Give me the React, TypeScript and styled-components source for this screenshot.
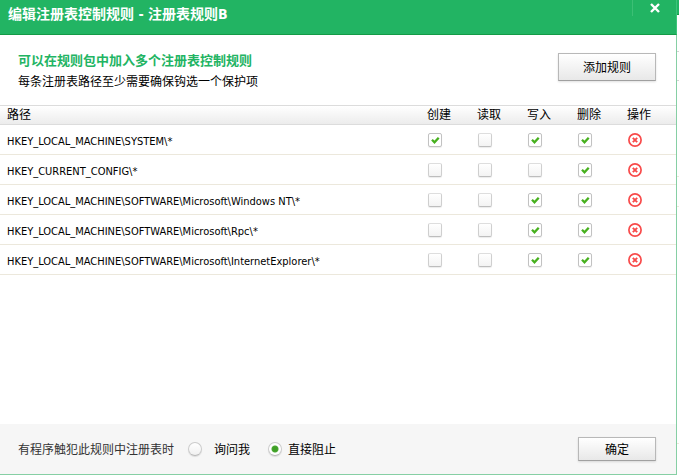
import React, { useState } from "react";
import styled, { createGlobalStyle } from "styled-components";

const GlobalStyle = createGlobalStyle`
  *, *::before, *::after { box-sizing: border-box; }
  html, body, #root { height: 100%; }
  body {
    margin: 0;
    background: #fff;
    color: #000;
    font: 12px/20px "Liberation Sans", "Noto Sans CJK SC", sans-serif;
  }
  button, input { font: inherit; color: inherit; }
`;

const Desktop = styled.div`
  display: grid;
  grid-template-columns: minmax(0, 1fr) 2px;
  min-height: 100%;
`;

const WindowBehind = styled.div`
  display: grid;
  grid-template-rows: 15px 37px 29px 96px 30px 237px 1fr;
  background: #fff;
`;

const BehindBand = styled.div<{ $tone?: "title" | "strong" }>`
  background: ${(p) => (p.$tone === "title" ? "#22b463" : "#fff")};
  border-bottom: 1px solid
    ${(p) => (p.$tone === "title" ? "#149a46" : p.$tone === "strong" ? "#d4d4d4" : "#ece8dc")};
`;

const Dialog = styled.section`
  display: flex;
  flex-direction: column;
  background: #fff;
  border: solid #86cfa4;
  border-width: 0 1px 1px 0;
`;

const TitleBar = styled.header`
  display: flex;
  justify-content: space-between;
  align-items: flex-start;
  height: 35px;
  margin-right: -1px;
  padding-left: 8px;
  background: #22b463;
  border: solid #149a46;
  border-width: 0 0 1px;
  border-right: 1px solid #3cc47a;
  color: #fff;
`;

const Title = styled.h1`
  margin: 0;
  padding-top: 4px;
  font-family: "DejaVu Sans Condensed", "Noto Sans CJK SC", sans-serif;
  font-size: 14px;
  line-height: 20px;
  font-weight: 700;
`;

const CloseButton = styled.button`
  display: flex;
  justify-content: center;
  width: 44px;
  height: 16px;
  padding: 3px 0 0;
  border: 0;
  border-left: 1px solid #3cbf75;
  background: none;
`;

const Intro = styled.div`
  display: flex;
  justify-content: space-between;
  align-items: flex-start;
  height: 70px;
  padding: 16px 20px 0 18px;
`;

const Lead = styled.h2`
  margin: 0;
  font-size: 13px;
  line-height: 20px;
  color: #22b463;
`;

const Hint = styled.p`
  margin: 0;
  line-height: 22px;
`;

const PushButton = styled.button<{ $size: "large" | "small" }>`
  width: ${(p) => (p.$size === "large" ? 98 : 78)}px;
  height: ${(p) => (p.$size === "large" ? 28 : 24)}px;
  margin-top: ${(p) => (p.$size === "large" ? 2 : 0)}px;
  padding: 2px 0 0;
  border: 1px solid #b8b8b8;
  border-bottom-color: #a0a0a0;
  background: linear-gradient(#fff, #e8e8e8);
  box-shadow: 0 1px 2px rgba(0, 0, 0, 0.12);
  line-height: 20px;
`;

const RuleTable = styled.table`
  width: 100%;
  table-layout: fixed;
  border-collapse: separate;
  border-spacing: 0;
`;

const HeadCell = styled.th<{ $width?: number }>`
  width: ${(p) => (p.$width ? `${p.$width}px` : "auto")};
  height: 20px;
  padding: 0 0 0 7px;
  border: solid #dcdcdc;
  border-width: 1px 0;
  background: linear-gradient(#fff, #ececec);
  font-weight: 400;
  line-height: 18px;
  text-align: left;
`;

const Cell = styled.td`
  height: 30px;
  padding: 0 0 0 8px;
  border-bottom: 1px solid #ece8dc;
  white-space: nowrap;
`;

const PathCell = styled(Cell)`
  padding: 4px 0 0 7px;
  font-family: "DejaVu Sans Condensed", "Noto Sans", sans-serif;
  font-size: 11px;
  line-height: 14px;
`;

const Check = styled.input`
  appearance: none;
  display: block;
  width: 14px;
  height: 14px;
  margin: 0;
  border: 1px solid #cfcfcf;
  border-top-color: #dedede;
  border-bottom-color: #bdbdbd;
  border-radius: 2px;
  background: linear-gradient(#fff, #f3f3f3);
  box-shadow: 0 1px 1px rgba(0, 0, 0, 0.08);

  &:checked {
    border-color: #c2c2c2;
    background: #fff;
  }
`;

const CheckBox = styled.span`
  display: grid;
  width: 14px;
  > * { grid-area: 1 / 1; }
  > svg { pointer-events: none; }
`;

const DeleteButton = styled.button`
  display: block;
  padding: 0;
  border: 0;
  background: none;
  line-height: 0;
`;

const Footer = styled.footer`
  display: flex;
  align-items: center;
  height: 50px;
  margin-top: auto;
  padding: 0 20px 0 18px;
  background: #f6f6f6;
`;

const Choices = styled.fieldset`
  display: flex;
  align-items: center;
  flex: 1;
  margin: 0;
  padding: 0;
  border: 0;
`;

const Question = styled.span`
  margin-right: 14px;
  padding-top: 2px;
  color: #333;
`;

const Choice = styled.label<{ $gap: number }>`
  display: flex;
  align-items: center;
  gap: ${(p) => p.$gap}px;
  margin-right: 18px;
`;

const ChoiceText = styled.span`
  padding-top: 2px;
`;

const Radio = styled.input`
  appearance: none;
  width: 14px;
  height: 14px;
  margin: 0;
  border: 1px solid #cbcbcb;
  border-bottom-color: #b8b8b8;
  border-radius: 50%;
  background: linear-gradient(#fff, #f0f0f0);
  box-shadow: 0 1px 1px rgba(0, 0, 0, 0.1);

  &:checked {
    background: radial-gradient(circle, #3f9f26 0 2px, #4aa832 3px, #fff 4px);
  }
`;

type Flags = [boolean, boolean, boolean, boolean];
const actions = ["创建", "读取", "写入", "删除"];
const initialRules: { path: string; flags: Flags }[] = [
  { path: "HKEY_LOCAL_MACHINE\\SYSTEM\\*", flags: [true, false, true, true] },
  { path: "HKEY_CURRENT_CONFIG\\*", flags: [false, false, false, true] },
  { path: "HKEY_LOCAL_MACHINE\\SOFTWARE\\Microsoft\\Windows NT\\*", flags: [false, false, true, true] },
  { path: "HKEY_LOCAL_MACHINE\\SOFTWARE\\Microsoft\\Rpc\\*", flags: [false, false, true, true] },
  { path: "HKEY_LOCAL_MACHINE\\SOFTWARE\\Microsoft\\InternetExplorer\\*", flags: [false, false, true, true] },
];

function ProtectionCheck({ label, initial }: { label: string; initial: boolean }) {
  const [on, setOn] = useState(initial);
  return (
    <CheckBox>
      <Check type="checkbox" aria-label={label} checked={on} onChange={() => setOn(!on)} />
      {on && (
        <svg width="14" height="14" viewBox="0 0 14 14" aria-hidden="true">
          <path d="M4 6.8 6.5 9.4 10.7 4.8" fill="none" stroke="#46b01e" strokeWidth="2.3" />
        </svg>
      )}
    </CheckBox>
  );
}

export default function App() {
  const [rules, setRules] = useState(initialRules);
  const [mode, setMode] = useState("block");

  return (
    <>
      <GlobalStyle />
      <Desktop>
        <Dialog>
          <TitleBar>
            <Title>编辑注册表控制规则 - 注册表规则B</Title>
            <CloseButton aria-label="关闭">
              <svg width="10" height="10" viewBox="0 0 10 10" aria-hidden="true">
                <path d="M1 1 9 9M9 1 1 9" stroke="#fff" strokeWidth="2.4" />
              </svg>
            </CloseButton>
          </TitleBar>
          <Intro>
            <div>
              <Lead>可以在规则包中加入多个注册表控制规则</Lead>
              <Hint>每条注册表路径至少需要确保钩选一个保护项</Hint>
            </div>
            <PushButton $size="large">添加规则</PushButton>
          </Intro>
          <RuleTable>
            <thead>
              <tr>
                <HeadCell>路径</HeadCell>
                {actions.map((name) => (
                  <HeadCell key={name} $width={50}>{name}</HeadCell>
                ))}
                <HeadCell $width={56}>操作</HeadCell>
              </tr>
            </thead>
            <tbody>
              {rules.map((rule) => (
                <tr key={rule.path}>
                  <PathCell>{rule.path}</PathCell>
                  {rule.flags.map((flag, i) => (
                    <Cell key={actions[i]}>
                      <ProtectionCheck label={actions[i]} initial={flag} />
                    </Cell>
                  ))}
                  <Cell>
                    <DeleteButton
                      aria-label="删除规则"
                      onClick={() => setRules(rules.filter((r) => r !== rule))}
                    >
                      <svg width="14" height="14" viewBox="0 0 14 14" aria-hidden="true">
                        <circle cx="7" cy="7" r="6.1" fill="none" stroke="#f84a4a" strokeWidth="1.7" />
                        <path d="M4.8 4.8 9.2 9.2M9.2 4.8 4.8 9.2" stroke="#f84a4a" strokeWidth="1.9" />
                      </svg>
                    </DeleteButton>
                  </Cell>
                </tr>
              ))}
            </tbody>
          </RuleTable>
          <Footer>
            <Choices>
              <Question>有程序触犯此规则中注册表时</Question>
              <Choice $gap={12}>
                <Radio type="radio" name="mode" checked={mode === "ask"} onChange={() => setMode("ask")} />
                <ChoiceText>询问我</ChoiceText>
              </Choice>
              <Choice $gap={6}>
                <Radio type="radio" name="mode" checked={mode === "block"} onChange={() => setMode("block")} />
                <ChoiceText>直接阻止</ChoiceText>
              </Choice>
            </Choices>
            <PushButton $size="small">确定</PushButton>
          </Footer>
        </Dialog>
        <WindowBehind aria-hidden="true">
          <BehindBand $tone="title" />
          <BehindBand $tone="strong" />
          <BehindBand $tone="strong" />
          <BehindBand />
          <BehindBand />
          <BehindBand />
        </WindowBehind>
      </Desktop>
    </>
  );
}
